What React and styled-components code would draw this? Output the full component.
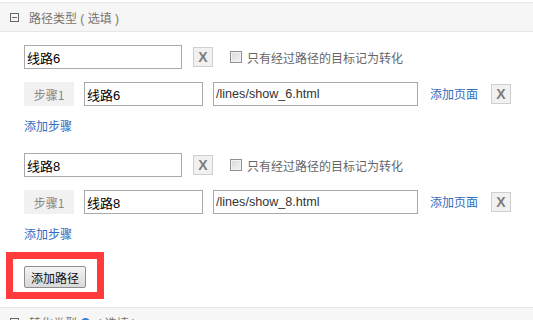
import React from 'react';
import styled, { createGlobalStyle } from 'styled-components';

const GlobalStyle = createGlobalStyle`
  html, body {
    margin: 0;
    padding: 0;
    background: #ffffff;
  }
  body {
    font-family: "Liberation Sans", "Noto Sans CJK SC", sans-serif;
    font-size: 12px;
    color: #333333;
  }
`;

const Page = styled.div`
  width: 533px;
  height: 320px;
  padding-top: 2px;
  box-sizing: border-box;
  overflow: hidden;
`;

const SectionHeader = styled.div`
  display: flex;
  align-items: center;
  height: 28px;
  border-top: 1px solid #e6e6e6;
  border-bottom: 1px solid #e6e6e6;
  background: #f6f6f6;
  padding-left: 10px;
  color: #7d746b;
  font-size: 12px;
  font-family: "Liberation Sans", "Noto Sans CJK SC", sans-serif;
  white-space: pre;
`;

const Toggle = styled.span`
  position: relative;
  width: 9px;
  height: 9px;
  border: 1px solid #666;
  box-sizing: border-box;
  margin-right: 10px;
  margin-top: 1px;

  &::after {
    content: '';
    position: absolute;
    left: 1px;
    right: 1px;
    top: 3px;
    height: 1px;
    background: #666;
  }
`;

const Help = styled.span`
  display: inline-flex;
  align-items: center;
  justify-content: center;
  width: 9px;
  height: 9px;
  border-radius: 50%;
  background: #3d7fd6;
  color: #fff;
  font-size: 8px;
  margin: 0 4px 0 4px;
`;

const Body = styled.div`
  padding: 13px 0 19px 24px;
`;

const Group = styled.div`
  display: flex;
  flex-direction: column;
  margin-bottom: 23px;

  & + & {
    margin-top: -5px;
  }
`;

const Row = styled.div`
  display: flex;
  align-items: center;
  height: 24px;
  margin-top: ${p => p.$top || 0}px;
`;

const TextInput = styled.input`
  box-sizing: border-box;
  width: ${p => p.$w}px;
  height: 24px;
  border: 1px solid #a9a9a9;
  padding: 0 2px;
  margin: 0 ${p => p.$gap || 0}px 0 0;
  font-family: "Liberation Sans", "Noto Sans CJK SC", sans-serif;
  font-size: ${p => (p.$url ? '12.6px' : '13px')};
  color: ${p => (p.$url ? '#333' : '#000')};
  outline: none;
`;

const RemoveButton = styled.span`
  box-sizing: border-box;
  display: inline-flex;
  align-items: center;
  justify-content: center;
  width: 20px;
  height: 20px;
  border: 1px solid #cfcfcf;
  background: #f1f1f1;
  color: #7c7c7c;
  font-weight: bold;
  font-size: 14px;
  font-family: "Liberation Sans", sans-serif;
  margin-left: ${p => p.$left || 0}px;
`;

const CheckLabel = styled.label`
  display: inline-flex;
  align-items: center;
  margin-left: 17px;
  color: #666;
  font-family: "Noto Sans CJK SC", sans-serif;
  font-size: 12px;
`;

const CheckBox = styled.span`
  box-sizing: border-box;
  width: 12px;
  height: 12px;
  border: 1px solid #8f8f8f;
  background: linear-gradient(135deg, #d8d8d8 0%, #f4f4f4 100%);
  box-shadow: inset 0 0 0 1px #f2f2f2;
  margin-right: 5px;
`;

const StepTag = styled.span`
  display: inline-flex;
  align-items: center;
  justify-content: center;
  width: 50px;
  height: 24px;
  background: #f1f1f1;
  color: #888;
  font-family: "Noto Sans CJK SC", sans-serif;
  font-size: 12px;
  margin-right: 10px;
`;

const Link = styled.a`
  color: #2f6dbf;
  text-decoration: none;
  font-family: "Noto Sans CJK SC", sans-serif;
  font-size: 12px;
  line-height: 18px;
  margin-left: ${p => p.$left || 0}px;
  margin-top: ${p => p.$top || 0}px;
  align-self: ${p => (p.$block ? 'flex-start' : 'auto')};
`;

const ButtonWrap = styled.div`
  position: relative;
  display: inline-block;

  &::after {
    content: '';
    position: absolute;
    left: -18px;
    right: -18px;
    top: -14px;
    bottom: -11px;
    border: 7px solid #ff3b3b;
    pointer-events: none;
  }
`;

const AddButton = styled.button`
  box-sizing: border-box;
  height: 22px;
  width: 62px;
  padding: 0;
  border: 1px solid #8e8e8e;
  border-radius: 2px;
  background: linear-gradient(to bottom, #f5f5f5 0%, #e6e6e6 50%, #d9d9d9 100%);
  color: #111;
  font-family: "Noto Sans CJK SC", sans-serif;
  font-size: 12px;
  display: block;
`;

const paths = [
  { name: '线路6', url: '/lines/show_6.html' },
  { name: '线路8', url: '/lines/show_8.html' },
];

export default function App() {
  return (
    <Page>
      <GlobalStyle />
      <SectionHeader>
        <Toggle />
        {'路径类型 ( 选填 )'}
      </SectionHeader>
      <Body>
        {paths.map(p => (
          <Group key={p.name}>
            <Row>
              <TextInput $w={158} defaultValue={p.name} />
              <RemoveButton $left={11}>X</RemoveButton>
              <CheckLabel>
                <CheckBox />
                只有经过路径的目标记为转化
              </CheckLabel>
            </Row>
            <Row $top={13}>
              <StepTag>步骤1</StepTag>
              <TextInput $w={119} $gap={10} defaultValue={p.name} />
              <TextInput $w={205} $url defaultValue={p.url} />
              <Link $left={12}>添加页面</Link>
              <RemoveButton $left={13}>X</RemoveButton>
            </Row>
            <Link $block $top={11}>添加步骤</Link>
          </Group>
        ))}
        <ButtonWrap>
          <AddButton>添加路径</AddButton>
        </ButtonWrap>
      </Body>
      <SectionHeader>
        <Toggle />
        转化类型
        <Help>?</Help>
        {' ( 选填 )'}
      </SectionHeader>
    </Page>
  );
}
